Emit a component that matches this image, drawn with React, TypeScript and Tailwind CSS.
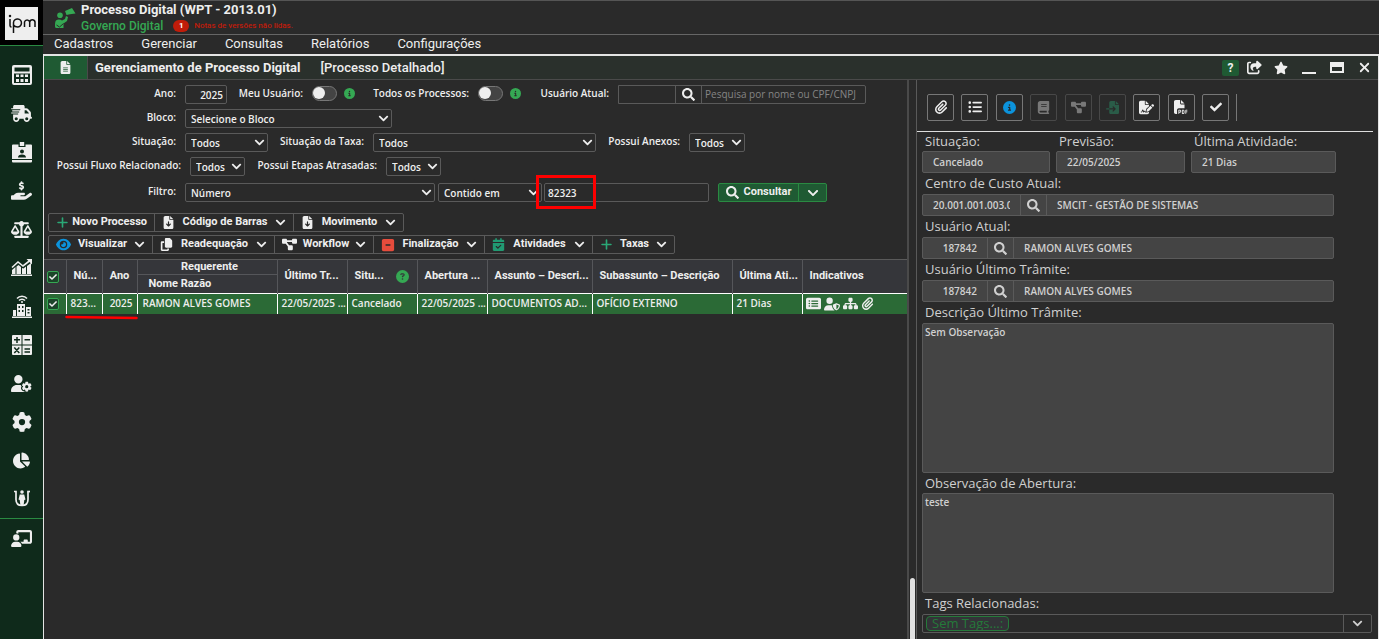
import type { ReactNode } from "react";
import { FaChartPie, FaCheck, FaChevronDown, FaSearch } from "react-icons/fa";
import {
  FaBook,
  FaCalendarCheck,
  FaChalkboardUser,
  FaCircleInfo,
  FaCircleQuestion,
  FaCopy,
  FaDiagramProject,
  FaEye,
  FaFileArrowDown,
  FaFileImport,
  FaFileLines,
  FaFilePdf,
  FaFileSignature,
  FaGear,
  FaHandHoldingDollar,
  FaListUl,
  FaPaperclip,
  FaPlus,
  FaRectangleList,
  FaScaleBalanced,
  FaShareFromSquare,
  FaSitemap,
  FaSquareMinus,
  FaStar,
  FaTruckFast,
  FaUserGear,
  FaUserShield,
  FaXmark,
} from "react-icons/fa6";

function CalculatorIcon() {
  return (
    <svg viewBox="0 0 20 20" className="w-5 h-5" fill="currentColor">
      <path
        fillRule="evenodd"
        d="M2 0h16a2 2 0 0 1 2 2v16a2 2 0 0 1-2 2H2a2 2 0 0 1-2-2V2a2 2 0 0 1 2-2zm.500 2.500v4h15v-4zm-.500 6v9.500h16V8.500z"
      />
      <path d="M4 9.500h3V12H4zM8.500 9.500h3V12h-3zM13 9.500h3V12h-3zM4 14h3v3H4zM8.500 14h3v3h-3zM13 14h3v3h-3z" />
    </svg>
  );
}

function BadgeIcon() {
  return (
    <svg viewBox="0 0 20 21" className="w-5 h-[21px]" fill="currentColor">
      <path
        fillRule="evenodd"
        d="M1 2.500h5.500V5h7V2.500H19a1 1 0 0 1 1 1V17H0V3.500a1 1 0 0 1 1-1zm9 5a2 2 0 1 0 0 4 2 2 0 0 0 0-4zM6 15.500h8c0-2-1.500-3-4-3s-4 1-4 3z"
      />
      <path d="M7.800 0h4.400v4H7.800zM0 18h20v1.500a1 1 0 0 1-1 1H1a1 1 0 0 1-1-1z" />
    </svg>
  );
}

function GrowthIcon() {
  return (
    <svg viewBox="0 0 21 17" className="w-[21px] h-[17px]" fill="currentColor">
      <path
        d="M1 8.500 7 3l5 4 7-5.500"
        fill="none"
        stroke="currentColor"
        strokeWidth="1.600"
      />
      <path d="M15.500 0H21v5.500zM1 11l3.500-3v7H1zM5.500 7.500 7.500 6 10 8v7H5.500zM11 9l1.500.5L15 7.500V15h-4zM16 7l4-3v11h-4zM0 15.500h21V17H0z" />
    </svg>
  );
}

function SmartCityIcon() {
  return (
    <svg viewBox="0 0 20 23" className="w-5 h-[23px]" fill="currentColor">
      <path
        d="M5 3.500C7.500.5 12.500.5 15 3.500M7 5.500c1.500-1.800 4.500-1.800 6 0"
        fill="none"
        stroke="currentColor"
        strokeWidth="1.500"
      />
      <circle cx="10" cy="7" r="1" />
      <path
        fillRule="evenodd"
        d="M5 9h8v12H5zm1.500 2v2h1.500v-2zm3.500 0v2h1.500v-2zm-3.500 4v2h1.500v-2zm3.500 0v2h1.500v-2zM14 12h5v9h-5zm1.500 2v1.500h2V14zm0 3v1.500h2V17zM1 15h3v6H1zM0 21.500h20V23H0z"
      />
    </svg>
  );
}

function OperationsIcon() {
  return (
    <svg viewBox="0 0 20 20" className="w-5 h-5">
      <path
        d="M1 0h8.500v9.500H0V1a1 1 0 0 1 1-1zM10.500 0H19a1 1 0 0 1 1 1v8.500h-9.500zM0 10.500h9.500V20H1a1 1 0 0 1-1-1zM10.500 10.500H20V19a1 1 0 0 1-1 1h-8.500z"
        fill="currentColor"
      />
      <path
        d="M2 4.800h6M5 2v6M12.500 4.800h5.500M2.300 12.500l5 5.500M7.300 12.500l-5 5.500M12.500 14h5.500M12.500 17h5.500"
        stroke="#0f2a1b"
        strokeWidth="1.500"
        fill="none"
      />
    </svg>
  );
}

function CitizenIcon() {
  return (
    <svg viewBox="0 0 16 17" className="w-4 h-[17px]" fill="currentColor">
      <path
        d="M0 1.500h2V9.500c0 3.700 2 6 6 6s6-2.300 6-6v-8"
        fill="none"
        stroke="currentColor"
        strokeWidth="1.700"
      />
      <path d="M13.200.7H16v1.700h-2.800z" />
      <circle cx="8" cy="2" r="1.800" />
      <path d="M5.800 4.500h4.400l1.300 5-1.200.5-.8 6h-3l-.8-6-1.200-.5z" />
    </svg>
  );
}

function AppIcon() {
  return (
    <svg viewBox="0 0 21 21" className="w-[21px] h-[21px]" fill="currentColor">
      <path d="M10 3 17 0l3.500 5.500-5.500.8-3.500.7z" />
      <circle cx="5" cy="7.300" r="2.800" />
      <path d="M1 12.500c1.500-1.300 4.500-1.200 6 0l3-1.500 1-3 2 1-1 4-3.500 2.500V20H1.500c-1.300 0-1.500-1-1.500-2 0-2 0-4.500 1-5.500z" />
      <path d="m1.500 17 3 2 4-3.500" stroke="#2a2a2a" fill="none" />
    </svg>
  );
}

function LogoIpm() {
  return (
    <svg
      viewBox="0 0 28 20"
      className="w-7 h-5"
      fill="none"
      stroke="#111"
      strokeWidth="1.500"
    >
      <path d="M2 5v6.500c0 1 .5 1.500 1.500 1.500M5.500 19V8.500a4 4 0 1 1 4 4.500c-1.500 0-3-.5-4-2M16.500 13V8a2.700 2.700 0 0 1 5.200 0V13M21.700 8a2.700 2.700 0 0 1 5.300 0V13" />
      <circle cx="2" cy="2" r=".5" />
    </svg>
  );
}

const modules: { name: string; icon: ReactNode }[] = [
  { name: "Contabilidade", icon: <CalculatorIcon /> },
  { name: "Frotas", icon: <FaTruckFast size={21} /> },
  { name: "Pessoal", icon: <BadgeIcon /> },
  { name: "Receitas", icon: <FaHandHoldingDollar size={21} /> },
  { name: "Jurídico", icon: <FaScaleBalanced size={21} /> },
  { name: "Indicadores", icon: <GrowthIcon /> },
  { name: "Cidade", icon: <SmartCityIcon /> },
  { name: "Cálculos", icon: <OperationsIcon /> },
  { name: "Usuários", icon: <FaUserGear size={21} /> },
  { name: "Configurações", icon: <FaGear size={20} /> },
  { name: "Relatórios", icon: <FaChartPie size={17} /> },
  { name: "Cidadão", icon: <CitizenIcon /> },
];

const menu = ["Cadastros", "Gerenciar", "Consultas", "Relatórios", "Configurações"];

interface FieldProps {
  id: string;
  label: string;
  labelClass: string;
}

function FieldLabel({ id, label, labelClass }: FieldProps) {
  return (
    <label
      htmlFor={id}
      className={`shrink-0 text-right whitespace-nowrap leading-[17px] ${labelClass}`}
    >
      {label}
    </label>
  );
}

interface SelectBoxProps {
  id: string;
  value: string;
  className: string;
  label?: string;
}

function SelectBox({ id, value, className, label }: SelectBoxProps) {
  return (
    <div className={`grid shrink-0 items-center ${className}`}>
      <select
        id={id}
        aria-label={label}
        defaultValue={value}
        className="col-start-1 row-start-1 w-full h-[19px] appearance-none rounded-xs border border-[#5a5a5a] bg-transparent pl-[5px] pr-4 leading-4"
      >
        <option>{value}</option>
      </select>
      <FaChevronDown
        size={11}
        className="col-start-1 row-start-1 justify-self-end mr-[3px] pointer-events-none"
      />
    </div>
  );
}

function Toggle({ id }: { id: string }) {
  return (
    <input
      id={id}
      type="checkbox"
      role="switch"
      className="shrink-0 w-[25px] h-[15px] appearance-none rounded-full border border-[#777] bg-[#444] before:block before:w-3 before:h-3 before:rounded-full before:bg-[#eee]"
    />
  );
}

function CheckBox({ label }: { label: string }) {
  return (
    <span className="grid place-items-center mr-1">
      <input
        type="checkbox"
        defaultChecked
        aria-label={label}
        className="col-start-1 row-start-1 w-3 h-3 appearance-none rounded-xs border border-[#35a853] bg-[#1c4529]"
      />
      <FaCheck size={8} className="col-start-1 row-start-1 pointer-events-none" />
    </span>
  );
}

interface Action {
  label: string;
  icon: ReactNode;
  width: string;
  arrow: boolean;
}

const fileActions: Action[] = [
  { label: "Novo Processo", icon: <FaPlus className="text-[#2aa876]" size={13} />, width: "w-[106px]", arrow: false },
  { label: "Código de Barras", icon: <FaFileArrowDown size={13} />, width: "w-[139px]", arrow: true },
  { label: "Movimento", icon: <FaFileArrowDown size={13} />, width: "w-[109px]", arrow: true },
];

const processActions: Action[] = [
  { label: "Visualizar", icon: <FaEye className="text-[#0c93dc]" size={15} />, width: "w-[104px]", arrow: true },
  { label: "Readequação", icon: <FaCopy size={13} />, width: "w-[122px]", arrow: true },
  { label: "Workflow", icon: <FaDiagramProject size={15} />, width: "w-[99px]", arrow: true },
  { label: "Finalização", icon: <FaSquareMinus className="text-[#e74c3c]" size={14} />, width: "w-[111px]", arrow: true },
  { label: "Atividades", icon: <FaCalendarCheck className="text-[#219a72]" size={13} />, width: "w-[108px]", arrow: true },
  { label: "Taxas", icon: <FaPlus className="text-[#2aa876]" size={13} />, width: "w-[81px]", arrow: true },
];

function ActionBar({ actions }: { actions: Action[] }) {
  return (
    <div className="flex w-fit h-[19px] rounded-xs border border-[#5a5a5a] divide-x divide-[#5a5a5a] font-['Roboto',sans-serif] font-bold text-[11px]">
      {actions.map((a) => (
        <button
          key={a.label}
          className={`flex items-center justify-between px-[7px] whitespace-nowrap ${a.width}`}
        >
          {a.icon}
          {a.label}
          {a.arrow && <FaChevronDown size={11} />}
        </button>
      ))}
    </div>
  );
}

function Filters() {
  return (
    <form className="pt-[5px] text-[10px] font-semibold" onSubmit={(e) => e.preventDefault()}>
      <div className="flex h-6 items-start">
        <FieldLabel id="ano" label="Ano:" labelClass="w-[132px]" />
        <input
          id="ano"
          defaultValue="2025"
          className="ml-[9px] w-[42px] h-[19px] rounded-xs border border-[#5a5a5a] px-[3px] text-right"
        />
        <FieldLabel id="meu-usuario" label="Meu Usuário:" labelClass="w-[76px]" />
        <span className="flex h-4 items-center ml-[9px] gap-[7px]">
          <Toggle id="meu-usuario" />
          <FaCircleInfo size={11} className="text-[#35a853]" />
        </span>
        <FieldLabel id="todos" label="Todos os Processos:" labelClass="w-[114px]" />
        <span className="flex h-4 items-center ml-[9px] gap-[7px]">
          <Toggle id="todos" />
          <FaCircleInfo size={11} className="text-[#35a853]" />
        </span>
        <FieldLabel id="usuario" label="Usuário Atual:" labelClass="w-[88px]" />
        <div className="flex ml-[9px] h-[19px] rounded-r-xs border border-[#5a5a5a] divide-x divide-[#5a5a5a]">
          <input id="usuario" className="w-[57px] px-1" />
          <button aria-label="Pesquisar usuário" className="grid place-items-center w-[26px]">
            <FaSearch size={13} />
          </button>
          <input
            aria-label="Nome do usuário"
            placeholder="Pesquisa por nome ou CPF/CNPJ"
            className="w-[163px] px-[3px] font-normal placeholder:text-[#858585]"
          />
        </div>
      </div>
      <div className="flex h-6 items-start">
        <FieldLabel id="bloco" label="Bloco:" labelClass="w-[132px]" />
        <SelectBox id="bloco" value="Selecione o Bloco" className="ml-[9px] w-[207px]" />
      </div>
      <div className="flex h-6 items-start">
        <FieldLabel id="situacao" label="Situação:" labelClass="w-[132px]" />
        <SelectBox id="situacao" value="Todos" className="ml-[9px] w-[83px]" />
        <FieldLabel id="taxa" label="Situação da Taxa:" labelClass="w-24" />
        <SelectBox id="taxa" value="Todos" className="ml-[9px] w-[223px]" />
        <FieldLabel id="anexos" label="Possui Anexos:" labelClass="w-[84px]" />
        <SelectBox id="anexos" value="Todos" className="ml-[9px] w-14" />
      </div>
      <div className="flex h-[26px] items-start">
        <FieldLabel id="fluxo" label="Possui Fluxo Relacionado:" labelClass="w-[137px]" />
        <SelectBox id="fluxo" value="Todos" className="ml-[9px] w-[55px]" />
        <FieldLabel id="etapas" label="Possui Etapas Atrasadas:" labelClass="w-[132px]" />
        <SelectBox id="etapas" value="Todos" className="ml-[9px] w-[55px]" />
      </div>
      <div className="flex h-[30px] items-start">
        <FieldLabel id="filtro" label="Filtro:" labelClass="w-[132px]" />
        <SelectBox id="filtro" value="Número" className="ml-[9px] w-[250px]" />
        <SelectBox id="operador" label="Operador" value="Contido em" className="ml-[3px] w-[104px]" />
        <div className="relative ml-[2px]">
          <input
            aria-label="Valor do filtro"
            defaultValue="82323"
            className="block w-[165px] h-[19px] rounded-xs border border-[#5a5a5a] px-[3px]"
          />
          <span className="absolute -left-2 -top-2 w-[60px] h-[34px] border-3 border-[#fe0000] pointer-events-none" />
        </div>
        <div className="flex ml-[9px] h-[19px] rounded-xs border border-[#2a8a42] bg-[#1f5a33] divide-x divide-[#2a8a42]">
          <button className="flex items-center justify-center gap-[5px] w-20 font-['Roboto',sans-serif] text-[11px] font-bold">
            <FaSearch size={13} />
            Consultar
          </button>
          <button aria-label="Mais opções" className="grid place-items-center w-[27px]">
            <FaChevronDown size={12} />
          </button>
        </div>
      </div>
    </form>
  );
}

const columns = [
  { name: "Último Tr...", width: "w-[70px]" },
  { name: "Situ...", width: "w-[70px]" },
  { name: "Abertura ...", width: "w-[70px]" },
  { name: "Assunto – Descri...", width: "w-[105px]" },
  { name: "Subassunto – Descrição", width: "w-[140px]" },
  { name: "Última Ati...", width: "w-[70px]" },
];

const rowCells = [
  "22/05/2025 ...",
  "Cancelado",
  "22/05/2025 ...",
  "DOCUMENTOS AD...",
  "OFÍCIO EXTERNO",
  "21 Dias",
];

function ProcessTable() {
  return (
    <table className="w-full table-fixed border-collapse text-[10px] font-semibold whitespace-nowrap">
      <colgroup>
        <col className="w-[22px]" />
        <col className="w-9" />
        <col className="w-[35px]" />
        <col className="w-[140px]" />
        {columns.map((c) => (
          <col key={c.name} className={c.width} />
        ))}
        <col />
      </colgroup>
      <thead className="bg-[#35363a] border-t border-[#5a5a5a] font-['Roboto',sans-serif] text-[11px]">
        <tr className="h-[15px]">
          <th rowSpan={2} className="border-r border-[#55565a]">
            <CheckBox label="Selecionar todos" />
          </th>
          <th rowSpan={2} className="border-r border-[#55565a] text-left pl-[7px] font-bold">Nú...</th>
          <th rowSpan={2} className="border-r border-[#55565a] font-bold">Ano</th>
          <th className="border-r border-b border-[#55565a] pl-[5px] font-bold leading-3">Requerente</th>
          {columns.map((c) => (
            <th
              key={c.name}
              rowSpan={2}
              className="border-r border-[#55565a] text-left pl-[7px] font-bold overflow-hidden"
            >
              <span className="flex items-center justify-between">
                {c.name}
                {c.name === "Situ..." && (
                  <FaCircleQuestion size={13} className="mr-2 text-[#35a853]" />
                )}
              </span>
            </th>
          ))}
          <th rowSpan={2} className="text-left pl-[7px] font-bold">Indicativos</th>
        </tr>
        <tr className="h-[19px]">
          <th className="border-r border-[#55565a] text-left pl-[11px] font-bold leading-4">Nome Razão</th>
        </tr>
      </thead>
      <tbody>
        <tr className="h-5 border-t border-white bg-[#2b6a36]">
          <td className="border-r border-white">
            <CheckBox label="Selecionar processo" />
          </td>
          <td className="border-r border-white pl-1">823...</td>
          <td className="border-r border-white pr-1 text-right">2025</td>
          <td className="border-r border-white pl-[5px]">RAMON ALVES GOMES</td>
          {rowCells.map((c, i) => (
            <td key={i} className="border-r border-white pl-1 overflow-hidden">
              {c}
            </td>
          ))}
          <td className="pl-[3px]">
            <span className="flex items-center gap-[3px]">
              <FaRectangleList size={15} />
              <FaUserShield size={16} />
              <FaSitemap size={15} />
              <FaPaperclip size={13} />
            </span>
          </td>
        </tr>
      </tbody>
    </table>
  );
}

const detailActions = [
  { name: "Anexos", icon: <FaPaperclip size={14} />, disabled: false },
  { name: "Lista", icon: <FaListUl size={14} />, disabled: false },
  { name: "Informações", icon: <FaCircleInfo size={13} className="text-[#0c93dc]" />, disabled: false },
  { name: "Livro", icon: <FaBook size={13} />, disabled: true },
  { name: "Fluxo", icon: <FaDiagramProject size={15} />, disabled: true },
  { name: "Importar", icon: <FaFileImport size={13} className="text-[#2aa876]" />, disabled: true },
  { name: "Assinar", icon: <FaFileSignature size={15} />, disabled: false },
  { name: "PDF", icon: <FaFilePdf size={14} />, disabled: false },
  { name: "Confirmar", icon: <FaCheck size={12} />, disabled: false },
];

interface LookupProps {
  id: string;
  label: string;
  code: string;
  name: string;
  codeClass: string;
}

function Lookup({ id, label, code, name, codeClass }: LookupProps) {
  return (
    <>
      <label htmlFor={id} className="block pl-[3px] text-[13px] leading-[21px]">
        {label}
      </label>
      <div className="flex mr-[39px] h-[22px] rounded-xs border border-[#5a5a5a] bg-[#444] divide-x divide-[#5a5a5a] text-[10px] font-semibold">
        <input id={id} readOnly defaultValue={code} className={`px-[10px] ${codeClass}`} />
        <button aria-label={`Pesquisar ${label}`} className="grid place-items-center w-[26px]">
          <FaSearch size={13} />
        </button>
        <input readOnly aria-label={`${label} nome`} defaultValue={name} className="flex-1 min-w-0 px-[10px]" />
      </div>
    </>
  );
}

function DetailPanel() {
  return (
    <aside className="w-[462px] shrink-0 border-l border-[#5a5a5a] text-[#d0d0d0] font-medium">
      <div className="flex h-[52px] items-center mr-[5px] pt-[3px] pl-[10px] border-b border-[#ddd] text-[#eee]">
        <div className="flex justify-between w-[302px]">
          {detailActions.map((a) => (
            <button
              key={a.name}
              aria-label={a.name}
              disabled={a.disabled}
              className="grid place-items-center w-[27px] h-[27px] rounded-xs border border-[#777] disabled:opacity-40"
            >
              {a.icon}
            </button>
          ))}
        </div>
        <span className="ml-[7px] h-[27px] border-l border-[#777]" />
      </div>
      <div className="px-[5px]">
        <div className="flex gap-[6px]">
          {[
            { id: "d-sit", label: "Situação:", value: "Cancelado", width: "w-32" },
            { id: "d-prev", label: "Previsão:", value: "22/05/2025", width: "w-[129px]" },
            { id: "d-ult", label: "Última Atividade:", value: "21 Dias", width: "w-[145px]" },
          ].map((f) => (
            <div key={f.id} className={f.width}>
              <label htmlFor={f.id} className="block pl-[3px] text-[13px] leading-[19px]">
                {f.label}
              </label>
              <input
                id={f.id}
                readOnly
                defaultValue={f.value}
                className="block w-full h-[22px] rounded-xs border border-[#5a5a5a] bg-[#444] px-[10px] text-[10px] font-semibold"
              />
            </div>
          ))}
        </div>
        <Lookup
          id="d-custo"
          label="Centro de Custo Atual:"
          code="20.001.001.003.001"
          name="SMCIT - GESTÃO DE SISTEMAS"
          codeClass="w-[98px]"
        />
        <Lookup id="d-usuario" label="Usuário Atual:" code="187842" name="RAMON ALVES GOMES" codeClass="w-[65px] text-right" />
        <Lookup id="d-tramite" label="Usuário Último Trâmite:" code="187842" name="RAMON ALVES GOMES" codeClass="w-[65px] text-right" />
        <label htmlFor="d-desc" className="block pl-[3px] text-[13px] leading-[21px]">
          Descrição Último Trâmite:
        </label>
        <div className="mr-[39px]">
          <textarea
            id="d-desc"
            readOnly
            defaultValue="Sem Observação"
            className="block w-full h-[150px] resize-none rounded-xs border border-[#5a5a5a] bg-[#444] px-[2px] text-[10px] font-semibold leading-[17px]"
          />
        </div>
        <label htmlFor="d-obs" className="block pl-[3px] text-[13px] leading-5">
          Observação de Abertura:
        </label>
        <div className="mr-[39px]">
          <textarea
            id="d-obs"
            readOnly
            defaultValue="teste"
            className="block w-full h-[100px] resize-none rounded-xs border border-[#5a5a5a] bg-[#444] px-[2px] text-[10px] font-semibold leading-[17px]"
          />
        </div>
        <p className="pl-[3px] text-[13px] leading-[21px]">Tags Relacionadas:</p>
        <div className="flex h-[19px] mr-px rounded-xs border border-[#5a5a5a]">
          <div className="flex-1 pl-[3px] pt-px">
            <span className="block w-fit rounded border border-[#257a3a] bg-[#333438] px-[5px] text-[13px] leading-[13px] text-[#257a3a]">
              Sem Tags...:
            </span>
          </div>
          <button aria-label="Abrir tags" className="grid place-items-center w-7 border-l border-[#5a5a5a]">
            <FaChevronDown size={11} />
          </button>
        </div>
      </div>
    </aside>
  );
}

export default function App() {
  return (
    <div className="flex min-h-screen bg-[#2a2a2a] text-[#eee] font-['Open_Sans','Noto_Sans',sans-serif]">
      <nav className="w-[43px] shrink-0 bg-[#0f2a1b]">
        <div className="h-[46px] pt-[7px] bg-black border-b border-[#2a8a42]">
          <a href="#" aria-label="IPM" className="grid place-items-center mx-auto w-[33px] h-[33px] bg-[#eee]">
            <LogoIpm />
          </a>
        </div>
        <div className="flex flex-col h-[473px] pt-[10px] border-b border-[#2a8a42]">
          {modules.map((m) => (
            <button key={m.name} aria-label={m.name} className="grid flex-1 place-items-center w-full">
              {m.icon}
            </button>
          ))}
        </div>
        <button aria-label="Atendimento" className="grid place-items-center w-full h-[38px]">
          <FaChalkboardUser size={21} />
        </button>
      </nav>

      <div className="flex flex-col flex-1 min-w-0 border-t border-[#555]">
        <header className="flex h-[34px] pl-3 border-b border-[#666] font-['Roboto',sans-serif]">
          <span className="mt-[7px] text-[#35a853]">
            <AppIcon />
          </span>
          <div className="ml-[5px]">
            <h1 className="text-[13px] font-bold leading-[17px]">Processo Digital (WPT - 2013.01)</h1>
            <p className="flex items-center gap-[10px] leading-3">
              <span className="text-xs font-medium text-[#35a853]">Governo Digital</span>
              <span className="flex items-center gap-[5px] text-[8px] font-medium text-[#c01c0a]">
                <b className="grid place-items-center w-4 h-3 rounded-full bg-[#c01c0a] text-white">1</b>
                Notas de versões não lidas.
              </span>
            </p>
          </div>
        </header>
        <div className="flex h-[19px] items-center gap-7 pl-[11px] pb-px font-['Roboto',sans-serif] text-[13px]">
          {menu.map((m) => (
            <button key={m}>{m}</button>
          ))}
        </div>

        <main className="flex flex-col flex-1 border-t-2 border-x border-[#e4e4e4]">
          <div className="flex h-6 items-center border-b border-[#4a4a4a] bg-[#2a302c] font-['Roboto',sans-serif]">
            <span className="grid place-items-center w-11 h-full border-r border-[#4a4a4a] bg-[#1f5a33]">
              <FaFileLines size={13} />
            </span>
            <h2 className="ml-[7px] text-[13px] font-bold">Gerenciamento de Processo Digital</h2>
            <span className="ml-5 text-[13px] font-medium">[Processo Detalhado]</span>
            <div className="flex items-center ml-auto mr-[6px]">
              <button className="w-[17px] h-4 rounded-xs bg-[#1f5a33] text-xs font-bold leading-4">?</button>
              <button aria-label="Compartilhar" className="ml-2">
                <FaShareFromSquare size={15} />
              </button>
              <button aria-label="Favorito" className="ml-3">
                <FaStar size={14} />
              </button>
              <button aria-label="Minimizar" className="ml-[14px] w-[14px] h-3 border-b-2 border-[#eee]" />
              <button aria-label="Maximizar" className="ml-[14px] w-[14px] h-[11px] border-x-2 border-b-2 border-t-[5px] border-[#eee]" />
              <button aria-label="Fechar" className="ml-[13px]">
                <FaXmark size={15} />
              </button>
            </div>
          </div>

          <div className="flex flex-1">
            <section className="flex-1 min-w-0">
              <Filters />
              <div className="flex flex-col gap-[3px] pl-1 pb-[5px]">
                <ActionBar actions={fileActions} />
                <ActionBar actions={processActions} />
              </div>
              <ProcessTable />
              <svg viewBox="0 0 73 6" className="ml-[21px] w-[73px] h-[6px]">
                <path d="M1.500 3 71.500 4" stroke="#fe0000" strokeWidth="2.500" strokeLinecap="round" />
              </svg>
            </section>
            <div className="flex flex-col justify-end w-[9px] shrink-0 border-l-2 border-[#4a4a4a]">
              <span className="mx-px h-[61px] rounded-t bg-[#e0e0e0]" />
            </div>
            <DetailPanel />
          </div>
        </main>
      </div>
    </div>
  );
}
